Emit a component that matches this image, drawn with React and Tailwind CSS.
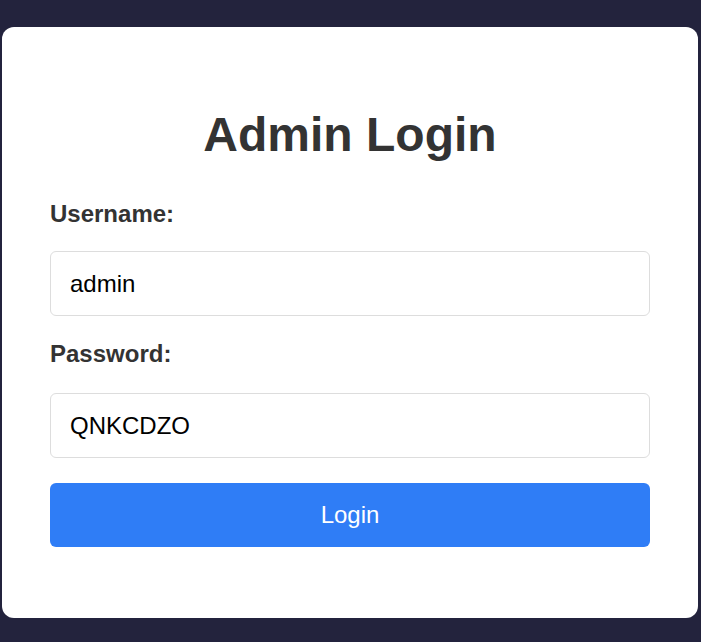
export default function App() {
  return (
    <div className="min-h-screen bg-[#23233d] pt-[27px] pb-[24px] font-['Liberation_Sans',Arial,sans-serif]">
      <div className="ml-[2px] w-[696px] bg-white rounded-[12px] px-12 pt-12 pb-[71px]">
        <h1 className="mt-8 mb-[38px] text-center text-[48px] leading-[55px] font-bold text-[#333333]">
          Admin Login
        </h1>

        <form className="flex flex-col" onSubmit={(e) => e.preventDefault()}>
          <label className="mb-[23px] text-[24px] leading-[28px] font-bold text-[#333333]">
            Username:
          </label>
          <input
            type="text"
            defaultValue="admin"
            className="h-[65px] w-full px-[19px] text-[24px] text-black border border-[#dddddd] rounded-[6px] outline-none"
          />

          <label className="mt-6 mb-[25px] text-[24px] leading-[28px] font-bold text-[#333333]">
            Password:
          </label>
          <input
            type="text"
            defaultValue="QNKCDZO"
            className="h-[65px] w-full px-[19px] text-[24px] text-black border border-[#dddddd] rounded-[6px] outline-none"
          />

          <button
            type="submit"
            className="mt-[25px] h-[64px] w-full bg-[#2f7df6] text-white text-[24px] rounded-[6px]"
          >
            Login
          </button>
        </form>
      </div>
    </div>
  );
}
